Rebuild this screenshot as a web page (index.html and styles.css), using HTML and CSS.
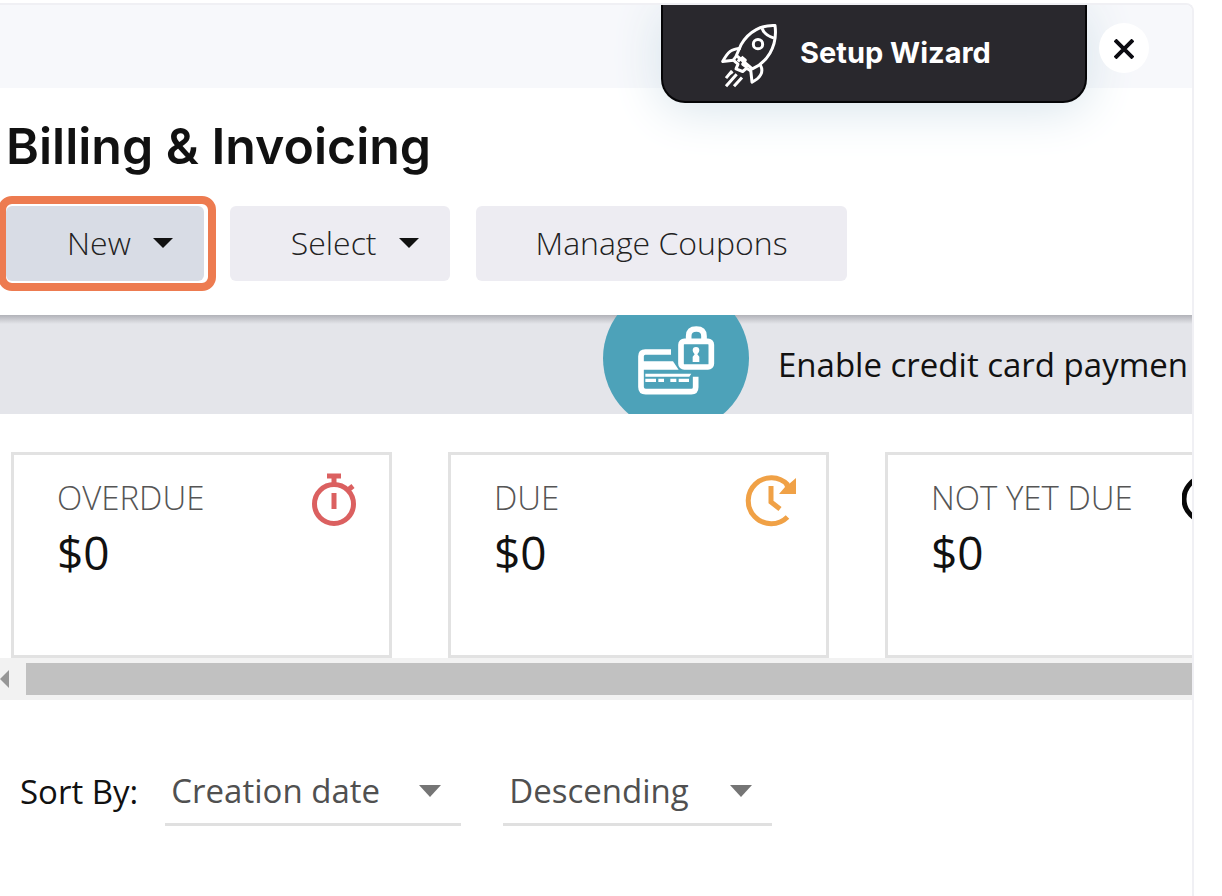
FILE: index.html
```html
<!DOCTYPE html>
<html lang="en">
<head>
<meta charset="utf-8">
<title>Billing &amp; Invoicing</title>
<link rel="stylesheet" href="styles.css">
</head>
<body>
<main class="panel">
  <div class="topbar">
    <button class="wizard" type="button">
      <svg class="rocket" viewBox="208 66 174 200" aria-hidden="true">
        <path d="M373 76C334 74 296 92 272 132L257 166 305 206C346 188 382 142 373 76Z"/>
        <path d="M334 84Q342 106 370 114"/>
        <circle cx="322" cy="132" r="14"/>
        <path d="M270 144C242 146 232 154 216 184L248 180"/>
        <path d="M328 192C342 216 328 234 304 246L300 208"/>
        <path d="M258 166L248 180 262 192 256 206 276 214 288 204 300 212M272 170L284 180 276 192 290 202M268 176L262 184"/>
        <path d="M244 212L226 234M258 222L226 258M274 232L250 258M236 222L246 214"/>
      </svg>
      <span>Setup Wizard</span>
    </button>
    <button class="close" type="button" aria-label="Close">
      <svg viewBox="0 0 20 20" aria-hidden="true"><path d="M1 1L19 19M19 1L1 19"/></svg>
    </button>
  </div>

  <header class="header">
    <h1>Billing &amp; Invoicing</h1>
    <div class="actions">
      <div class="highlight"><button class="btn active" type="button">New <i class="caret"></i></button></div>
      <button class="btn" type="button">Select <i class="caret"></i></button>
      <button class="btn plain" type="button">Manage Coupons</button>
    </div>
  </header>

  <section class="banner">
    <svg class="badge" viewBox="39 45 438 297" aria-hidden="true">
      <circle class="disc" cx="258" cy="175" r="219"/>
      <path class="line" d="M243 156H166Q153 156 153 169V261Q153 275 167 275H304Q317 275 317 262V230"/>
      <path class="fill" d="M153 184H249L266 209H153ZM166 221H304L298 230H166ZM166 236H198V246H166ZM205 236H222V246H205ZM241 236H259V246H241ZM266 236H297V246H266Z"/>
      <rect class="line" x="273" y="124" width="91" height="77" rx="10"/>
      <path class="line" d="M296 122V108Q296 87 319 87T342 108V122"/>
      <path class="fill" d="M308 151A10 10 0 1 1 328 151Q328 158 322 163L328 170V186H308V170L314 163Q308 158 308 151Z"/>
    </svg>
    <p>Enable credit card paymen</p>
  </section>

  <section class="cards">
    <article class="card">
      <div><h2>OVERDUE</h2><p>$0</p></div>
      <svg class="icon red" viewBox="0 0 52 56" aria-hidden="true">
        <circle cx="26" cy="32" r="19.5"/><path d="M26 12V4M19 4H33M40 18L45 14M26 21V37"/>
      </svg>
    </article>
    <article class="card">
      <div><h2>DUE</h2><p>$0</p></div>
      <svg class="icon orange" viewBox="0 0 52 56" aria-hidden="true">
        <path d="M42.500 45A23 23 0 1 1 43 13"/><path d="M26 14V30L35 37"/><path class="solid" d="M51 6V22H34L40 15 38 10 44 12Z"/>
      </svg>
    </article>
    <article class="card">
      <div><h2>NOT YET DUE</h2><p>$0</p></div>
      <svg class="icon black" viewBox="0 0 52 56" aria-hidden="true">
        <circle cx="24" cy="27" r="22"/><path d="M24 13V28L34 35"/>
      </svg>
    </article>
  </section>
  <div class="scrollbar">
    <button class="scroll-left" type="button" aria-label="Scroll left"></button>
    <div class="thumb"></div>
  </div>

  <form class="sort">
    <label for="sort-field">Sort By:</label>
    <div class="picker field">
      <select id="sort-field"><option>Creation date</option><option>Due date</option></select>
      <i class="caret"></i>
    </div>
    <div class="picker order">
      <select id="sort-order" aria-label="Sort order"><option>Descending</option><option>Ascending</option></select>
      <i class="caret"></i>
    </div>
  </form>
</main>
</body>
</html>
```
FILE: styles.css
```css
* { box-sizing: border-box; }

body {
  margin: 0;
  background: #fff;
  color: #111;
  font-family: "Open Sans", "Noto Sans", sans-serif;
  font-size: 33px;
  line-height: 40px;
}

h1, h2, p { margin: 0; }

button, select {
  border: 0;
  color: inherit;
  font: inherit;
}

.panel {
  min-height: calc(100vh - 3px);
  margin: 3px 28px 0 0;
  border: 2px solid #f0f0f4;
  border-width: 2px 2px 0 0;
  border-radius: 0 8px 0 0;
  overflow: hidden;
}

.topbar {
  display: flex;
  justify-content: flex-end;
  align-items: flex-start;
  gap: 12px;
  height: 83px;
  padding-right: 43px;
  background: #f7f8fb;
}

.wizard {
  position: relative;
  z-index: 1;
  display: flex;
  align-items: center;
  gap: 22px;
  width: 426px;
  height: 98px;
  padding: 0 0 0 57px;
  border: 2px solid #050507;
  border-top: 0;
  border-radius: 0 0 24px 24px;
  background: #29282d;
  box-shadow: 0 6px 50px #d6e3eb;
  color: #fff;
  font-family: Inter, sans-serif;
  font-size: 29px;
  font-weight: 700;
}

.rocket {
  width: 58px;
  height: 67px;
  margin-top: 4px;
  fill: none;
  stroke: #fff;
  stroke-width: 9;
  stroke-linejoin: round;
}

.close {
  position: relative;
  z-index: 2;
  display: grid;
  place-items: center;
  width: 50px;
  height: 50px;
  margin-top: 18px;
  padding: 2px 0 0;
  border-radius: 50%;
  background: #fff;
}

.close svg {
  width: 20px;
  height: 20px;
  fill: none;
  stroke: #0c0c12;
  stroke-width: 4;
}

.header { padding: 26px 6px 34px; }

h1 {
  font-family: Inter, sans-serif;
  font-size: 50px;
  font-weight: 600;
  line-height: 64px;
}

.actions {
  display: flex;
  gap: 26px;
  margin-top: 28px;
}

.highlight { position: relative; }

.highlight::after {
  content: "";
  position: absolute;
  inset: -10px -12px -10px -8px;
  border: 8px solid #ed7b50;
  border-radius: 14px;
  pointer-events: none;
}

.btn {
  display: flex;
  align-items: center;
  gap: 22px;
  height: 75px;
  padding: 0 31px 2px 61px;
  border-radius: 6px;
  background: #edecf2;
  color: #222;
  font-size: 32px;
  font-weight: 300;
}

.active { background: #d8dce5; }
.plain { padding-right: 59px; padding-left: 60px; }

.caret {
  border: 10px solid transparent;
  border-top-color: #111;
  border-bottom: 0;
}

.banner {
  display: flex;
  align-items: center;
  gap: 29px;
  height: 99px;
  padding-left: 603px;
  background: linear-gradient(rgb(60 60 70 / 30%), transparent 9px) #e4e5ea;
  white-space: nowrap;
}

.banner p { font-weight: 500; }

.badge {
  flex: none;
  width: 146px;
  height: 99px;
}

.disc { fill: #4da2b9; }
.line { fill: none; stroke: #fff; stroke-width: 17; }
.fill { fill: #fff; }

.cards {
  display: flex;
  gap: 56px;
  padding: 38px 0 0 11px;
}

.card {
  display: flex;
  flex: none;
  justify-content: space-between;
  width: 381px;
  height: 206px;
  padding: 17px 29px 0 43px;
  border: 3px solid #e2e2e2;
}

.card h2 {
  margin-top: 6px;
  color: #555;
  font-size: 33px;
  font-weight: 300;
}

.card p {
  margin-top: 6px;
  font-size: 46px;
  line-height: 56px;
}

.icon {
  width: 52px;
  height: 56px;
  fill: none;
  stroke: currentColor;
  stroke-width: 5;
}

.red { color: #db6060; }
.orange { color: #f0a146; }
.black { color: #080808; }
.solid { fill: currentColor; stroke: none; }

.scrollbar {
  display: flex;
  align-items: center;
  height: 42px;
  background: #f2f2f2;
}

.scroll-left {
  width: 26px;
  height: 32px;
  padding: 0;
  background: none;
}

.scroll-left::before {
  content: "";
  display: block;
  width: 0;
  border: 9px solid transparent;
  border-right-color: #979797;
  border-left: 0;
}

.thumb {
  flex: 1;
  height: 32px;
  background: #c1c1c1;
}

.sort {
  display: flex;
  align-items: center;
  padding: 58px 20px 0;
}

.sort label { font-weight: 500; }

.picker {
  display: grid;
  align-items: center;
  border-bottom: 3px solid #e0e0e0;
}

.picker select, .picker .caret { grid-area: 1 / 1; }

.picker select {
  width: 100%;
  height: 65px;
  padding: 0 0 0 6px;
  appearance: none;
  background: transparent;
  color: #505050;
}

.picker .caret {
  justify-self: end;
  margin-right: 20px;
  border-width: 12px 11px 0;
  border-top-color: #757575;
  pointer-events: none;
}

.field { width: 296px; margin-left: 27px; }
.order { width: 269px; margin-left: 42px; }
```
